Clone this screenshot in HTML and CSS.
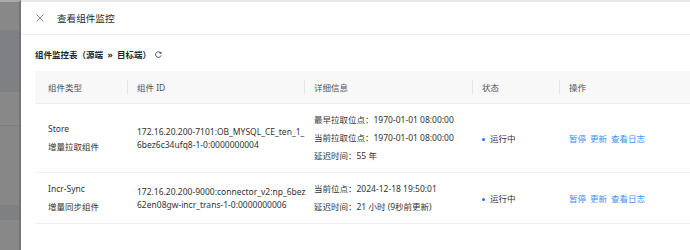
FILE: index.html
```html
<!DOCTYPE html>
<html lang="zh-CN">
<head>
    <meta charset="UTF-8">
    <title>查看组件监控</title>
    <link rel="stylesheet" href="styles.css">
</head>
<body>
    <div class="fundo">
        <div class="faixa f1"></div>
        <div class="faixa f2"></div>
        <div class="faixa f3"></div>
        <div class="faixa f4"></div>
        <div class="faixa f5"></div>
        <div class="faixa f6"></div>
        <div class="faixa f7"></div>
    </div>

    <div class="gaveta">
        <div class="cabecalho">
            <svg class="fechar" width="8" height="8" viewBox="0 0 8 8">
                <path d="M0.5 0.5 L7.5 7.5 M7.5 0.5 L0.5 7.5" stroke="#777" stroke-width="0.9" fill="none"/>
            </svg>
            <span class="titulo">查看组件监控</span>
        </div>

        <div class="conteudo">
            <div class="subtitulo">
                组件监控表（源端 &nbsp;»&nbsp; 目标端）
                <svg class="recarregar" width="7" height="7" viewBox="0 0 10 10">
                    <path d="M8.3 3.2 A4 4 0 1 0 8.6 6.4" stroke="#333" stroke-width="1.2" fill="none"/>
                    <path d="M9.2 0.8 L9 3.8 L6.1 3.4 Z" fill="#333"/>
                </svg>
            </div>

            <table>
                <colgroup>
                    <col class="c1">
                    <col class="c2">
                    <col class="c3">
                    <col class="c4">
                    <col>
                </colgroup>
                <thead>
                    <tr>
                        <th class="primeira">组件类型</th>
                        <th><span class="sep"></span>组件 ID</th>
                        <th><span class="sep"></span>详细信息</th>
                        <th><span class="sep"></span>状态</th>
                        <th><span class="sep"></span>操作</th>
                    </tr>
                </thead>
                <tbody>
                    <tr class="linha1">
                        <td class="primeira">
                            <div class="nome">Store</div>
                            <div class="nome">增量拉取组件</div>
                        </td>
                        <td class="id">172.16.20.200-7101:OB_MYSQL_CE_ten_1_<br>6bez6c34ufq8-1-0:0000000004</td>
                        <td class="detalhe">
                            <div>最早拉取位点：1970-01-01 08:00:00</div>
                            <div>当前拉取位点：1970-01-01 08:00:00</div>
                            <div>延迟时间：55 年</div>
                        </td>
                        <td><span class="ponto"></span>运行中</td>
                        <td class="acoes"><a>暂停</a><a>更新</a><a>查看日志</a></td>
                    </tr>
                    <tr class="linha2">
                        <td class="primeira">
                            <div class="nome">Incr-Sync</div>
                            <div class="nome">增量同步组件</div>
                        </td>
                        <td class="id">172.16.20.200-9000:connector_v2:np_6bez<br>62en08gw-incr_trans-1-0:0000000006</td>
                        <td class="detalhe">
                            <div>当前位点：2024-12-18 19:50:01</div>
                            <div>延迟时间：21 小时 (9秒前更新)</div>
                        </td>
                        <td><span class="ponto"></span>运行中</td>
                        <td class="acoes"><a>暂停</a><a>更新</a><a>查看日志</a></td>
                    </tr>
                </tbody>
            </table>
        </div>
    </div>
</body>
</html>
```

FILE: styles.css
```css
html, body {
    margin: 0;
    height: 100%;
    overflow: hidden;
}

body {
    display: flex;
    font-family: "Noto Sans", "Noto Sans CJK SC", sans-serif;
    font-size: 8.5px;
    color: #333;
    background-color: white;
}

/* fundo escurecido da pagina atras da gaveta */
.fundo {
    width: 19px;
    flex-shrink: 0;
    display: flex;
    flex-direction: column;
    border-right: 2px solid #747474;
    border-top: 2px solid #a9a9a9;
}

.faixa {
    background-color: #888;
}

.f1 { height: 28px; }
.f2 { height: 62px; background-color: #7e8084; }
.f3 { height: 33px; }
.f4 { height: 1px; background-color: #7a7a7a; }
.f5 { height: 79px; background-color: #878787; }
.f6 { height: 15px; background-color: #7e8084; }
.f7 { flex: 1; }

.gaveta {
    flex: 1;
    min-width: 0;
    border-top: 2px solid #e8e8e8;
}

.cabecalho {
    height: 32px;
    display: flex;
    align-items: center;
    padding-left: 15px;
    border-bottom: 1px solid #efefef;
}

.fechar {
    margin-right: 13px;
}

.titulo {
    font-size: 9.6px;
    color: #1c2733;
}

.conteudo {
    padding-left: 14px;
}

.subtitulo {
    height: 36px;
    display: flex;
    align-items: center;
    gap: 4px;
    font-weight: bold;
    color: #1c2733;
    padding-top: 2px;
    box-sizing: border-box;
}

table {
    border-collapse: collapse;
    table-layout: fixed;
    width: 100%;
}

.c1 { width: 92px; }
.c2 { width: 177px; }
.c3 { width: 168px; }
.c4 { width: 87px; }

th {
    height: 32px;
    padding: 0 0 0 10px;
    text-align: left;
    font-weight: normal;
    color: #4a5560;
    background-color: #f8f8f8;
    border-bottom: 1px solid #efefef;
    position: relative;
}

.sep {
    position: absolute;
    left: 0;
    top: 9px;
    height: 14px;
    border-left: 1px solid #e6e6e6;
}

td {
    padding: 0 0 0 10px;
    vertical-align: middle;
    border-bottom: 1px solid #efefef;
    color: #333;
}

th.primeira, td.primeira {
    padding-left: 13px;
}

.linha1 td {
    height: 68px;
}

.linha2 td {
    height: 50px;
}

.nome {
    line-height: 18.5px;
}

.id {
    line-height: 13.5px;
    white-space: nowrap;
}

.detalhe {
    line-height: 18px;
    white-space: nowrap;
}

.ponto {
    display: inline-block;
    width: 3px;
    height: 3px;
    border-radius: 50%;
    background-color: #1677ff;
    margin-right: 5px;
    vertical-align: middle;
}

.acoes a {
    color: #4090fa;
    margin-right: 4px;
    cursor: pointer;
}
```
